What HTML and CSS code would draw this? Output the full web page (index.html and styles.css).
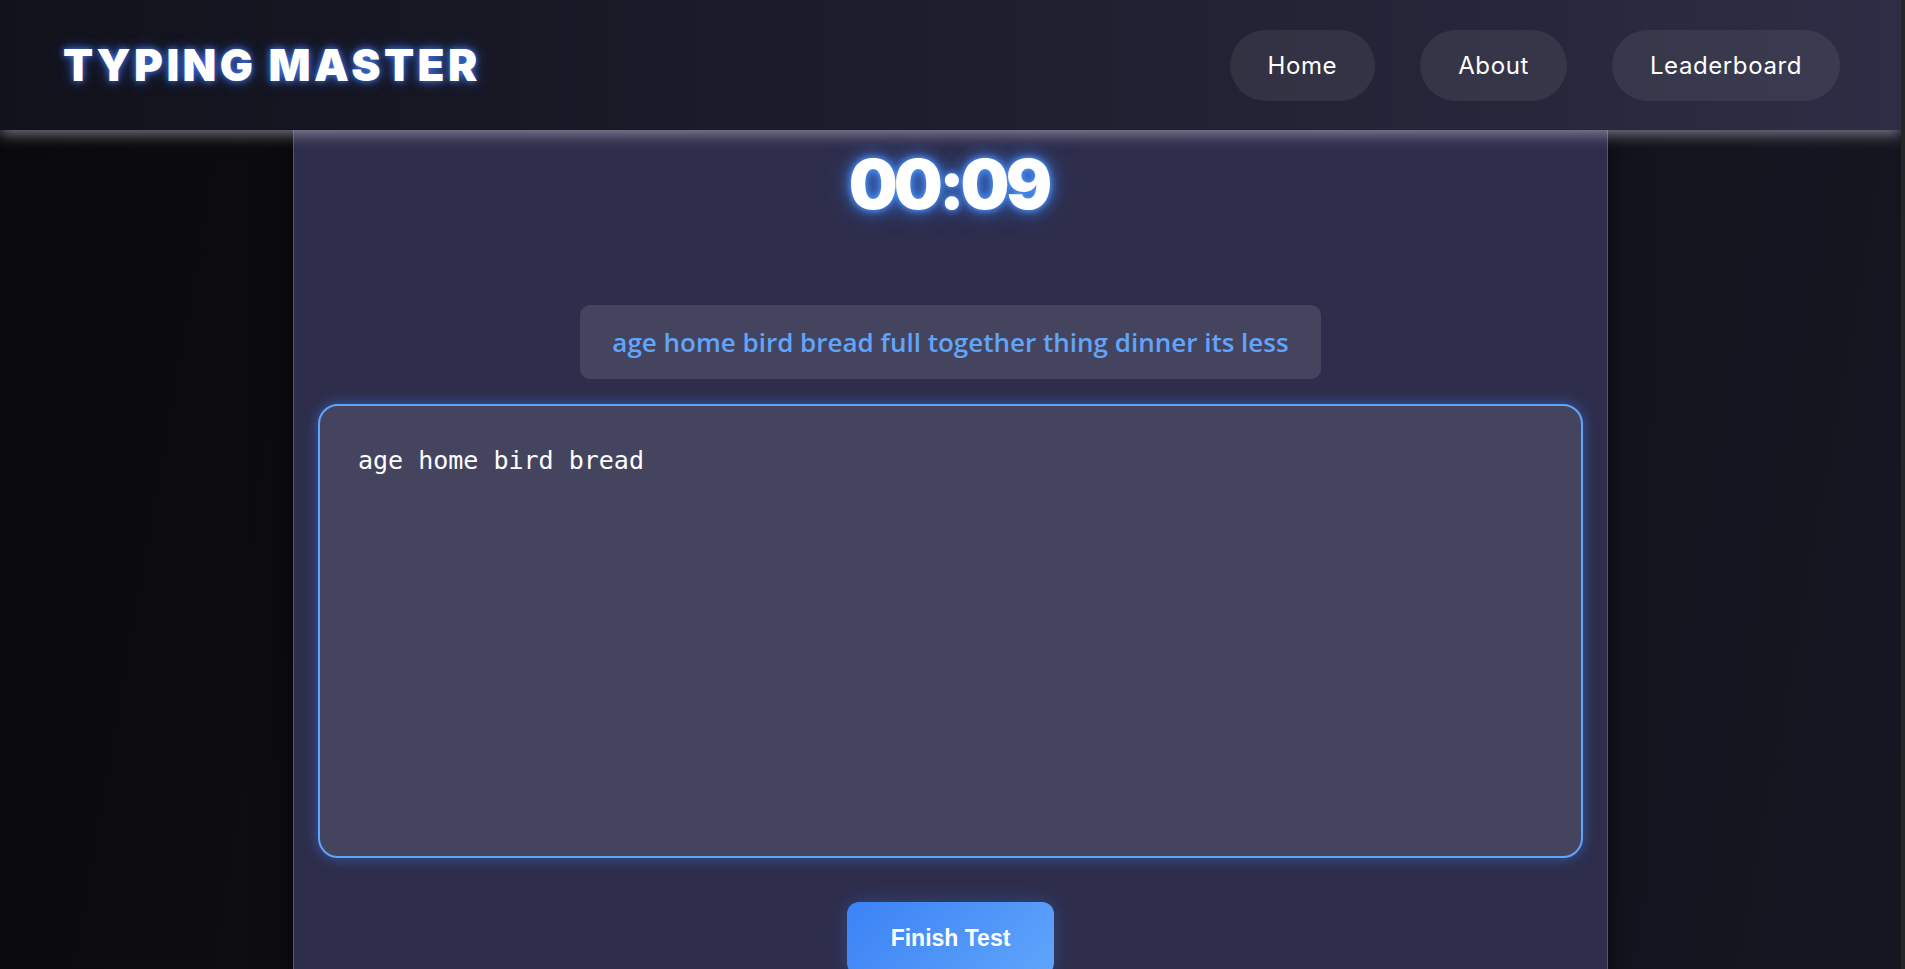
FILE: index.html
```html
<!DOCTYPE html>
<html lang="en">
<head>
<meta charset="utf-8">
<title>Typing Master</title>
<link rel="stylesheet" href="styles.css">
</head>
<body>
<header class="topbar">
  <h1 class="brand">TYPING MASTER</h1>
  <nav class="nav">
    <a class="nav-link" href="#">Home</a>
    <a class="nav-link" href="#">About</a>
    <a class="nav-link" href="#">Leaderboard</a>
  </nav>
</header>
<main class="stage">
  <div class="timer">00:09</div>
  <div class="words">age home bird bread full together thing dinner its less</div>
  <textarea class="input" spellcheck="false" autofocus>age home bird bread</textarea>
  <div class="actions">
    <button class="finish" type="button">Finish Test</button>
  </div>
</main>
<script src="app.js"></script>
</body>
</html>
```

FILE: styles.css
```css
html {
  overflow: hidden;
  background: #262626;
}

body {
  margin: 0 4px 0 0;
  padding: 0;
  min-height: 969px;
  background: linear-gradient(100deg, #0a0a0c 0%, #11111a 50%, #161622 100%);
  font-family: "Inter", "Liberation Sans", sans-serif;
  color: #fff;
}

.topbar {
  position: relative;
  z-index: 2;
  height: 130px;
  box-sizing: border-box;
  display: flex;
  align-items: center;
  justify-content: space-between;
  padding: 0 61px 0 63px;
  background: linear-gradient(90deg, #12121c 0%, #1c1c2b 45%, #2d2d45 100%);
  box-shadow: 0 4px 14px rgba(210, 210, 225, 0.55);
}

.brand {
  margin: 0;
  font-family: "Inter", sans-serif;
  font-weight: 900;
  font-size: 44px;
  letter-spacing: 3.4px;
  color: #fff;
  text-shadow: 0 0 6px rgba(70, 130, 246, 0.9), 0 0 14px rgba(59, 110, 246, 0.6);
}

.nav {
  display: flex;
  gap: 45px;
}

.nav-link {
  display: block;
  padding: 21px 38px;
  border-radius: 36px;
  background: rgba(255, 255, 255, 0.07);
  color: #fff;
  text-decoration: none;
  font-family: "Inter", sans-serif;
  font-size: 24px;
  letter-spacing: 0.6px;
  line-height: 29px;
}

.stage {
  width: 1315px;
  box-sizing: border-box;
  margin: 0 auto;
  min-height: 900px;
  padding: 12px 24px 40px;
  background: #2e2d4b;
  border-left: 1px solid #55547a;
  border-right: 1px solid #55547a;
  box-shadow: 0 0 30px rgba(0, 0, 0, 0.6);
  display: flex;
  flex-direction: column;
  align-items: center;
}

.timer {
  font-family: "Inter", sans-serif;
  font-weight: 900;
  font-size: 69px;
  letter-spacing: -4px;
  padding-right: 4px;
  color: #fff;
  text-shadow: 0 0 6px rgba(90, 160, 255, 1), 0 0 14px rgba(59, 130, 246, 0.9), 0 0 26px rgba(59, 130, 246, 0.6);
  margin-bottom: 79px;
}

.words {
  padding: 19px 32px;
  border-radius: 10px;
  background: #45445f;
  color: #60a5fa;
  font-family: "Open Sans", sans-serif;
  font-weight: 600;
  font-size: 26px;
  margin-bottom: 25px;
}

.input {
  display: block;
  width: 100%;
  height: 454px;
  box-sizing: border-box;
  resize: none;
  margin: 0;
  padding: 40px 38px 38px;
  border: 2px solid #60a5fa;
  border-radius: 20px;
  background: #45445f;
  color: #fff;
  caret-color: #fff;
  font-family: "DejaVu Sans Mono", monospace;
  font-size: 25px;
  outline: none;
  box-shadow: 0 0 14px rgba(59, 130, 246, 0.55);
}

.actions {
  margin-top: 44px;
  display: flex;
  justify-content: center;
}

.finish {
  padding: 23px 44px;
  border: none;
  border-radius: 12px;
  background: linear-gradient(135deg, #3b82f6 0%, #60a5fa 100%);
  color: #fff;
  font-family: "Liberation Sans", Arial, sans-serif;
  font-weight: 700;
  font-size: 23px;
  box-shadow: 0 0 20px rgba(59, 130, 246, 0.3);
}
```

FILE: app.js
```js
const t = document.querySelector('.input');
t.focus();
t.setSelectionRange(t.value.length, t.value.length);
```
